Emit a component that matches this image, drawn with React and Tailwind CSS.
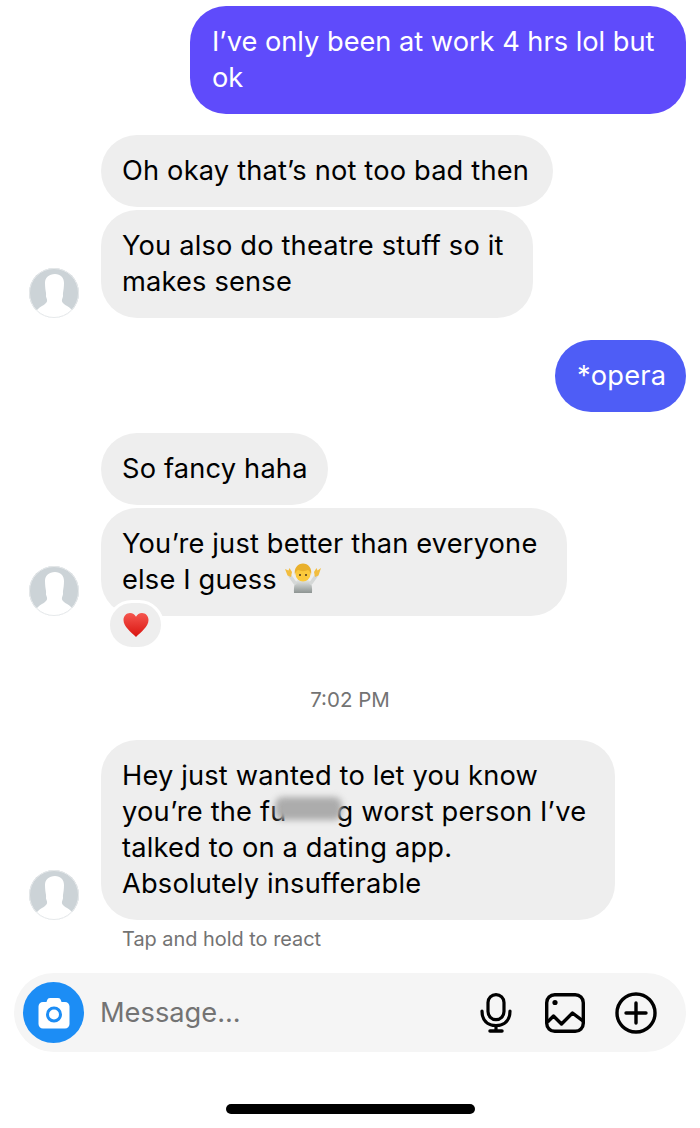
import React from "react";

const FONT = "font-['Inter','Liberation_Sans',sans-serif]";

function Avatar() {
  return (
    <svg width="50" height="50" viewBox="0 0 50 50" className="shrink-0">
      <defs>
        <clipPath id="avatar-clip"><circle cx="25" cy="25" r="25" /></clipPath>
      </defs>
      <g clipPath="url(#avatar-clip)">
        <rect width="50" height="50" fill="#ccd3d7" />
        <path d="M26 6c-6 0-10 3.500-10 9 0 4 .5 7 1 10 .3 2-.5 3 .5 5 1 2.500 1 4-1.500 6-2 1.500-5 3-7 5-2 2-4 4-4 9h41c0-4-2-7-4-9-2-2-5-3.500-7-5-2.500-2-2.500-3.500-1.500-6 1-2 .2-3 .5-5 .5-3 1-6 1-10 0-5.500-3.500-9-9-9z" fill="#fff" />
        <path d="M4 41c6 2 13 3 21 3s15-1 21-3l4 9H0z" fill="#fff" />
      </g>
      <circle cx="25" cy="25" r="24.500" fill="none" stroke="#e6e9eb" />
    </svg>
  );
}

function Shrug() {
  return (
    <svg width="36" height="32" viewBox="0 0 36 32" className="inline-block align-[-6px]">
      <defs>
        <linearGradient id="shirt" x1="0" y1="0" x2="0" y2="1">
          <stop offset="0" stopColor="#e3e6e5" />
          <stop offset="1" stopColor="#8d9492" />
        </linearGradient>
      </defs>
      <path d="M9 30c-.5-7 1-12 4-13h10c3 1 4.500 6 4 13z" fill="url(#shirt)" />
      <path d="M10 20L5 13M26 20l5-7" stroke="#d5d8d7" strokeWidth="3.500" strokeLinecap="round" />
      <path d="M0 6l3.500 1.500L4.500 5l2.500 4-1 5-3.500-1.500z" fill="#f2bd3f" />
      <path d="M36 5l-3.500 2.500L31.500 5 29 9l1 5 3.500-1.500z" fill="#f2bd3f" />
      <circle cx="18" cy="11" r="7.500" fill="#fbc93c" />
      <path d="M10 12c-1.500-7 3-11.500 8-11.500S27.500 5 26 12c-.5-2.500-1.500-4-3-5-3 1.500-7 1.500-10 0-1.500 1-2.500 2.500-3 5z" fill="#e9b02c" />
      <circle cx="15" cy="12" r="1" fill="#4a3520" />
      <circle cx="21" cy="12" r="1" fill="#4a3520" />
    </svg>
  );
}

function Heart() {
  return (
    <svg width="26" height="26" viewBox="0 0 26 26">
      <defs>
        <linearGradient id="heart-fill" x1="0" y1="0" x2="0" y2="1">
          <stop offset="0" stopColor="#f5564f" />
          <stop offset="1" stopColor="#d9140f" />
        </linearGradient>
      </defs>
      <path d="M13 25C8 20 .5 14.500.5 8 .5 3.800 3.500 1 7 1c2.700 0 4.800 1.400 6 3.800C14.200 2.400 16.300 1 19 1c3.500 0 6.500 2.800 6.500 7 0 6.500-7.500 12-12.500 17z" fill="url(#heart-fill)" />
    </svg>
  );
}

function Received({ children, width, avatar, className = "" }) {
  return (
    <div className={`flex items-end ${className}`}>
      <div className="w-[101px] shrink-0 pl-[29px]">{avatar && <Avatar />}</div>
      <div className={`rounded-[36px] bg-[#eeeeee] py-[18px] pl-[21px] pr-[14px] text-[27.25px] leading-[36px] text-black ${width}`}>
        {children}
      </div>
    </div>
  );
}

function Sent({ children, className = "" }) {
  return (
    <div className="flex justify-end pr-[14px]">
      <div className={`rounded-[36px] py-[18px] pl-[22px] pr-[14px] text-[27.25px] leading-[36px] text-white ${className}`}>
        {children}
      </div>
    </div>
  );
}

export default function App() {
  return (
    <div className={`relative h-[1128px] w-[700px] overflow-hidden bg-white tracking-[0.17px] ${FONT}`}>
      <div className="flex flex-col pt-[6px]">
        <Sent className="w-[496px] bg-[#5f4bfb] tracking-[-0.03px]">
          I’ve only been at work 4 hrs lol but
          <br />
          ok
        </Sent>

        <Received width="w-[452px]" className="mt-[21px]">Oh okay that’s not too bad then</Received>
        <Received width="w-[432px]" avatar className="mt-[3px]">You also do theatre stuff so it makes sense</Received>

        <div className="mt-[22px]">
          <Sent className="w-[131px] bg-[#4e5df6]">*opera</Sent>
        </div>

        <Received width="w-[227px]" className="mt-[21px]">So fancy haha</Received>
        <div className="relative">
          <Received width="w-[466px]" avatar className="mt-[3px]">
            You’re just better than everyone else I guess <Shrug />
          </Received>
          <div className="absolute left-[107px] top-[95px] flex h-[50px] w-[57px] items-center justify-center rounded-full border-[3px] border-white bg-[#eeeeee]">
            <Heart />
          </div>
        </div>

        <div className="mt-[71px] text-center text-[20.5px] leading-[26px] tracking-normal text-[#737373]">7:02 PM</div>

        <Received width="w-[514px]" avatar className="mt-[27px]">
          Hey just wanted to let you know
          <br />
          you’re the fu
          <span className="relative inline-block h-[26px] w-[50px]">
            <span className="absolute -left-[12px] top-[2px] h-[23px] w-[67px] rounded-lg bg-[#acacac] blur-[3px]" />
          </span>
          g worst person I’ve
          <br />
          talked to on a dating app.
          <br />
          Absolutely insufferable
        </Received>

        <div className="mt-[7px] pl-[122px] text-[19.9px] leading-[24px] tracking-normal text-[#737373]">Tap and hold to react</div>

        <div className="mx-[14px] mt-[22px] flex h-[79px] items-center rounded-full bg-[#f5f5f5] pl-[9px] pr-[29px]">
          <div className="flex h-[61px] w-[61px] shrink-0 items-center justify-center rounded-full bg-[#1c8df5]">
            <svg width="32" height="32" viewBox="0 0 32 32">
              <path d="M9 3.500C9.500 1.800 10.500 1 12 1h8c1.500 0 2.500.8 3 2.500L23.500 5H27c2.500 0 4.500 2 4.500 4.500V27c0 2.500-2 4.500-4.500 4.500H5C2.500 31.500.5 29.500.5 27V9.500C.5 7 2.500 5 5 5h3.500z" fill="#fff" />
              <circle cx="16" cy="17.500" r="6.500" fill="none" stroke="#1c8df5" strokeWidth="3" />
            </svg>
          </div>
          <div className="ml-[16px] flex-1 text-[27.25px] leading-[36px] tracking-normal text-[#737373]">Message...</div>
          <svg width="32" height="40" viewBox="0 0 32 40" fill="none" stroke="#000" strokeWidth="3.200" strokeLinecap="round">
            <rect x="8" y="1.600" width="16" height="25" rx="8" />
            <path d="M2 18c0 9.500 5.500 14.500 14 14.500S30 27.500 30 18M16 33v4" />
            <path d="M10 38h12" strokeWidth="3.500" />
          </svg>
          <svg width="40" height="40" viewBox="0 0 40 40" fill="none" stroke="#000" strokeWidth="3.400" strokeLinejoin="round" className="ml-[33px]">
            <rect x="1.700" y="1.700" width="36.600" height="36.600" rx="8" />
            <path d="M2.500 29l6-6 8 8 11-11 10.500 8" />
            <circle cx="10" cy="9.500" r="2.600" fill="#000" stroke="none" />
          </svg>
          <svg width="42" height="42" viewBox="0 0 42 42" fill="none" stroke="#000" strokeWidth="3.400" strokeLinecap="round" className="ml-[30px]">
            <circle cx="21" cy="21" r="19" />
            <path d="M21 11v20M11 21h20" />
          </svg>
        </div>
      </div>

      <div className="absolute bottom-[14px] left-[226px] h-[10px] w-[249px] rounded-full bg-black" />
    </div>
  );
}
